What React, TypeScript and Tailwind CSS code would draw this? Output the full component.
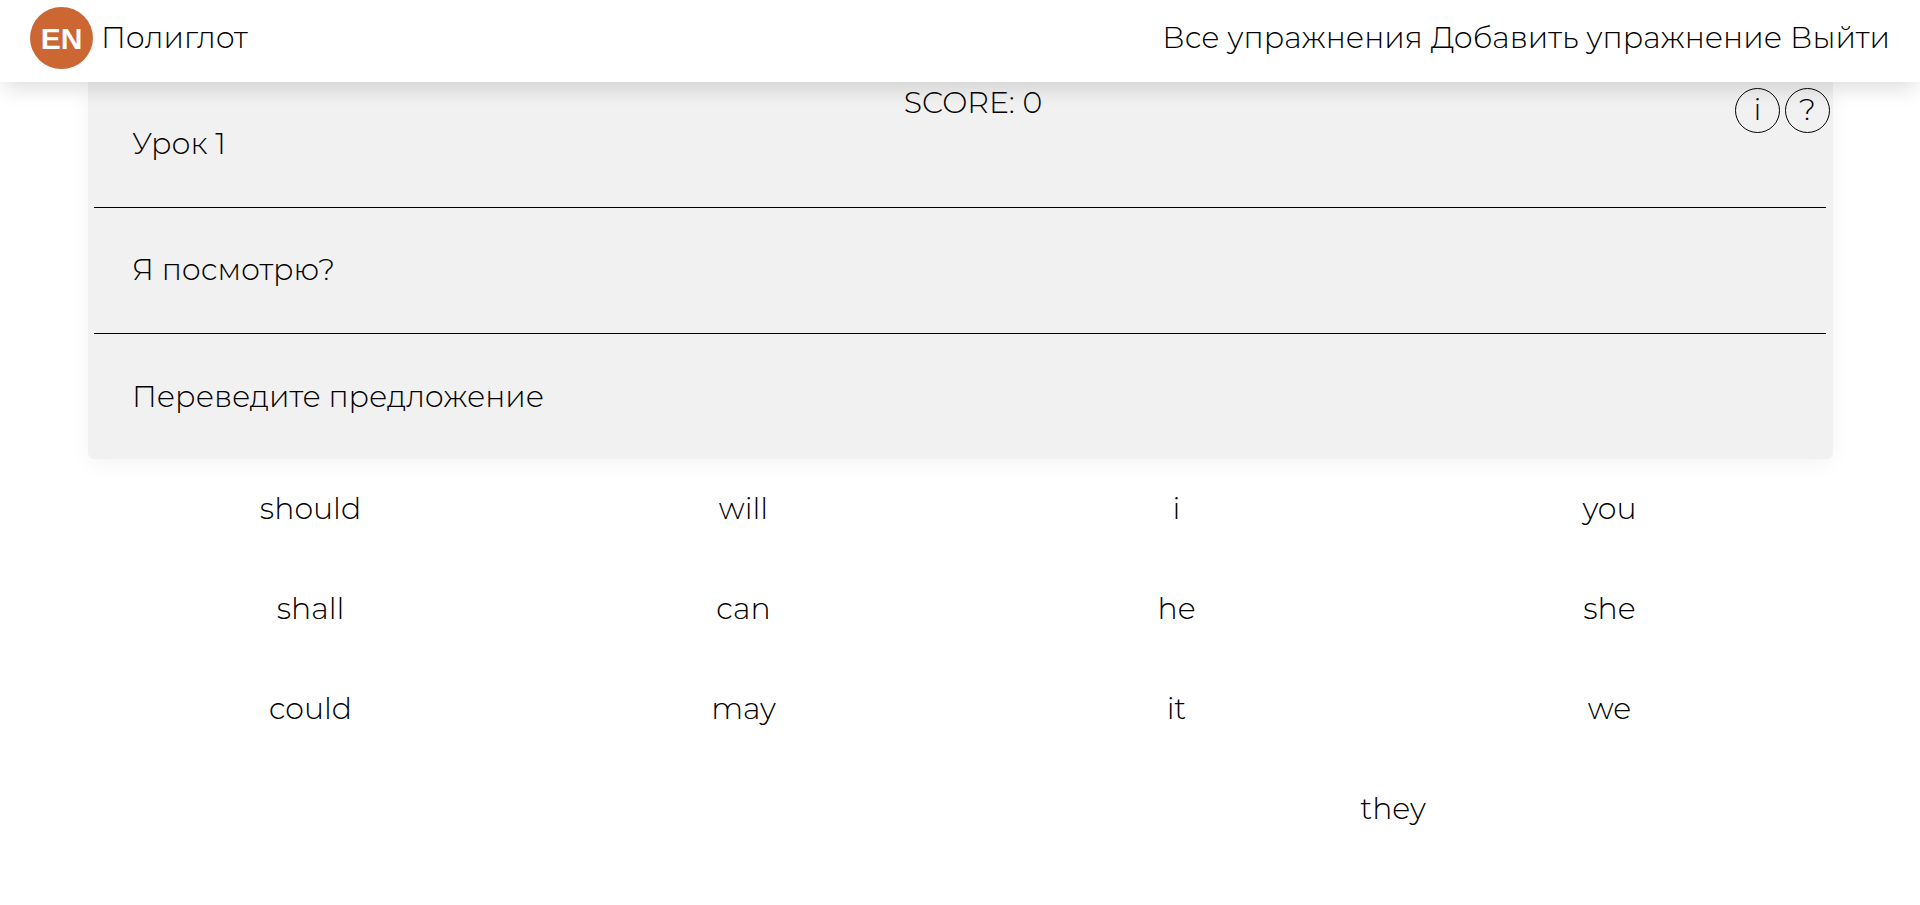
const auxiliaries = ["should", "will", "shall", "can", "could", "may"];
const pronouns = ["i", "you", "he", "she", "it", "we", "they"];

function Words({ words }: { words: string[] }) {
  return (
    <div className="flex w-1/2 flex-wrap justify-center">
      {words.map((word) => (
        <button key={word} type="button" className="h-[100px] w-1/2 cursor-pointer">
          {word}
        </button>
      ))}
    </div>
  );
}

export default function App() {
  return (
    <div className="min-h-screen bg-white font-['Montserrat','Inter',sans-serif] text-[30px] leading-[36px] font-light text-black">
      <header className="relative z-10 flex h-[82px] items-center justify-between bg-white px-[30px] pb-[6px] shadow-[0_10px_20px_-4px_rgba(10,10,10,0.14)]">
        <a href="#" className="flex items-center gap-2">
          <svg viewBox="0 0 63 62" className="h-[62px] w-[63px]" aria-hidden="true">
            <ellipse cx="31.5" cy="31" rx="31.5" ry="31" fill="#cc6633" />
            <text x="31.5" y="42" textAnchor="middle" fill="#fff" fontFamily="Liberation Sans, sans-serif" fontWeight="700" fontSize="30">
              EN
            </text>
          </svg>
          Полиглот
        </a>
        <nav className="flex gap-2">
          <a href="#">Все упражнения</a>
          <a href="#">Добавить упражнение</a>
          <a href="#">Выйти</a>
        </nav>
      </header>

      <main>
        <section className="mr-[87px] ml-[88px] rounded-b-md bg-[#f1f1f1] pr-[7px] pl-[6px] shadow-[0_6px_24px_-2px_rgba(10,10,10,0.05)]">
          <div className="grid h-[126px] grid-cols-[1fr_auto_1fr] border-b border-black">
            <h1 className="self-center pb-[2px] pl-[38px]">Урок 1</h1>
            <p className="pt-[3px] pl-[26px]">SCORE: 0</p>
            <div className="-mr-1 flex justify-end gap-[5px] pt-[6px]">
              <button type="button" aria-label="Информация" className="size-[45px] cursor-pointer rounded-full border border-black pb-[2px]">
                i
              </button>
              <button type="button" aria-label="Помощь" className="size-[45px] cursor-pointer rounded-full border border-black pb-[2px]">
                ?
              </button>
            </div>
          </div>
          <p className="flex h-[126px] items-center border-b border-black pb-[2px] pl-[38px]">Я посмотрю?</p>
          <p className="flex h-[125px] items-center pl-[38px]">Переведите предложение</p>
        </section>

        <div className="mx-[94px] flex items-start">
          <Words words={auxiliaries} />
          <Words words={pronouns} />
        </div>
      </main>
    </div>
  );
}
